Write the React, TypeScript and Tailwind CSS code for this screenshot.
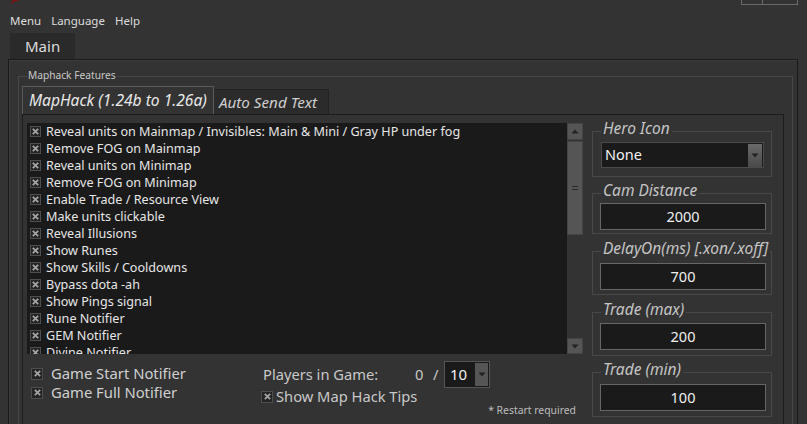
const features = [
  'Reveal units on Mainmap / Invisibles: Main & Mini / Gray HP under fog',
  'Remove FOG on Mainmap',
  'Reveal units on Minimap',
  'Remove FOG on Minimap',
  'Enable Trade / Resource View',
  'Make units clickable',
  'Reveal Illusions',
  'Show Runes',
  'Show Skills / Cooldowns',
  'Bypass dota -ah',
  'Show Pings signal',
  'Rune Notifier',
  'GEM Notifier',
  'Divine Notifier',
]

const font = { fontFamily: '"Noto Sans", "Open Sans", sans-serif' }

function CheckX({ box = 'w-[11px] h-[11px]' }: { box?: string }) {
  return (
    <span className={`${box} shrink-0 border border-[#4e4e4e] bg-[#242424] flex items-center justify-center`}>
      <svg width="7" height="7" viewBox="0 0 7 7">
        <path d="M0.8 0.8 L6.2 6.2 M6.2 0.8 L0.8 6.2" stroke="#a6a6a6" strokeWidth="1.7" />
      </svg>
    </span>
  )
}

function ArrowDown({ color = '#222' }: { color?: string }) {
  return (
    <svg width="8" height="5" viewBox="0 0 8 5">
      <path d="M0.5 0.5 L7.5 0.5 L4 4.5 Z" fill={color} />
    </svg>
  )
}

function Box({ label, top, h, children }: { label: string; top: string; h: string; children: React.ReactNode }) {
  return (
    <div className={`relative shrink-0 ${top} ${h} border border-[#484848]`}>
      <span className="absolute -top-[13px] left-[8px] px-[2px] bg-[#333333] italic text-[15.5px] leading-[18px] text-[#c4c4c4] whitespace-nowrap">
        {label}
      </span>
      {children}
    </div>
  )
}

function ValueInput({ value, mt }: { value: string; mt: string }) {
  return (
    <div className={`${mt} ml-[7px] w-[166px] h-[27px] bg-[#1a1a1a] border border-[#666] flex items-center justify-center text-[14.5px] text-[#f0f0f0]`}>
      {value}
    </div>
  )
}

export default function App() {
  return (
    <div className="w-[807px] h-[424px] overflow-hidden bg-[#333333] flex flex-col text-[#e6e6e6]" style={font}>
      {/* title strip */}
      <div className="h-[12px] shrink-0 flex justify-between items-start">
        <svg className="ml-[10px]" width="10" height="4" viewBox="0 0 10 4">
          <path d="M0 4 L3 0 L10 0 Q5 1 0 4 Z" fill="#7a1212" />
        </svg>
        <div className="mr-[9px] flex">
          <div className="w-[22px] h-[5px] border border-t-0 border-[#6b6b6b]" />
          <div className="w-[35px] h-[5px] border border-t-0 border-l-0 border-[#6b6b6b]" />
        </div>
      </div>

      {/* menu */}
      <div className="h-[18px] shrink-0 flex items-center gap-[10px] pl-[10px] text-[11.5px] text-[#dcdcdc]">
        <span>Menu</span>
        <span>Language</span>
        <span>Help</span>
      </div>

      {/* main tab */}
      <div className="shrink-0 mt-[3px] ml-[10px] w-[65px] h-[26px] bg-[#2a2a2a] flex items-center pl-[15px] text-[15px] text-[#dcdcdc]">
        Main
      </div>

      {/* outer panel */}
      <div className="ml-[8px] w-[790px] flex-1 min-h-0 overflow-hidden border border-b-0 border-[#1a1a1a] shadow-[inset_1px_1px_0_#3c3c3c]">
        <div className="relative mt-[16px] ml-[9px] w-[775px] h-[400px] border border-b-0 border-[#474747]">
          <span className="absolute -top-[10px] left-[8px] px-[1px] bg-[#333333] text-[10.2px] leading-[16px] text-[#c8c8c8]">
            Maphack Features
          </span>

          {/* inner tabs */}
          <div className="pt-[9px] pl-[3px] flex items-end">
            <div className="w-[192px] h-[28px] border border-b-0 border-[#5a5a5a] bg-[#333333] flex items-center pl-[6px] italic text-[15.6px] text-[#e8e8e8] whitespace-nowrap">
              MapHack (1.24b to 1.26a)
            </div>
            <div className="w-[115px] h-[25px] border border-b-0 border-l-0 border-[#222] bg-[#2b2b2b] flex items-center pl-[5px] italic text-[15.2px] text-[#cfcfcf] whitespace-nowrap">
              Auto Send Text
            </div>
          </div>

          {/* tab panel */}
          <div className="ml-[3px] w-[762px] h-[320px] border border-b-0 border-[#1c1c1c] flex">
            <div className="pl-[4px] pt-[8px] flex flex-col">
              {/* listbox */}
              <div className="w-[556px] h-[231px] shrink-0 bg-[#1a1a1a] flex">
                <div className="w-[540px] overflow-hidden">
                  {features.map(f => (
                    <div key={f} className="h-[17px] flex items-center pl-[3px] text-[12.6px] leading-[17px] whitespace-nowrap">
                      <CheckX />
                      <span className="ml-[5px]">{f}</span>
                    </div>
                  ))}
                </div>
                <div className="w-[16px] flex flex-col bg-[#333333]">
                  <div className="h-[17px] bg-[#555] border border-[#444] flex items-center justify-center">
                    <svg width="8" height="5" viewBox="0 0 8 5">
                      <path d="M0.5 4.5 L7.5 4.5 L4 0.5 Z" fill="#222" />
                    </svg>
                  </div>
                  <div className="mt-[1px] h-[94px] bg-[#555] border border-[#444] flex items-center justify-center">
                    <svg width="6" height="4" viewBox="0 0 6 4">
                      <path d="M0 0.5 H6 M0 3.5 H6" stroke="#2a2a2a" strokeWidth="1" />
                    </svg>
                  </div>
                  <div className="flex-1" />
                  <div className="h-[16px] bg-[#555] border border-[#444] flex items-center justify-center">
                    <ArrowDown />
                  </div>
                </div>
              </div>

              {/* bottom controls */}
              <div className="flex">
                <div className="w-[234px] pl-[4px] pt-[10px] flex flex-col text-[14.8px] text-[#d0d0d0]">
                  <div className="h-[19px] flex items-center">
                    <CheckX box="w-[12px] h-[12px]" />
                    <span className="ml-[8px]">Game Start Notifier</span>
                  </div>
                  <div className="h-[19px] flex items-center">
                    <CheckX box="w-[12px] h-[12px]" />
                    <span className="ml-[8px]">Game Full Notifier</span>
                  </div>
                </div>
                <div className="w-[322px] flex flex-col text-[14.7px] text-[#c8c8c8]">
                  <div className="mt-[7px] h-[27px] flex items-center">
                    <span className="w-[154px] pl-[2px]">Players in Game:</span>
                    <span className="w-[18px]">0</span>
                    <span className="w-[11px]">/</span>
                    <div className="w-[46px] h-[27px] bg-[#1a1a1a] border border-[#555] flex items-center">
                      <span className="flex-1 pl-[5px] text-[15px] text-[#f2f2f2]">10</span>
                      <div className="w-[13px] h-[23px] mr-[1px] bg-[#555] flex items-center justify-center">
                        <ArrowDown />
                      </div>
                    </div>
                  </div>
                  <div className="h-[17px] flex items-center">
                    <CheckX box="w-[12px] h-[12px]" />
                    <span className="ml-[3px]">Show Map Hack Tips</span>
                  </div>
                  <div className="mt-[-1px] h-[14px] flex items-center justify-end pr-[7px] text-[10.4px] text-[#bdbdbd]">
                    * Restart required
                  </div>
                </div>
              </div>
            </div>

            {/* right column */}
            <div className="ml-[9px] w-[180px] flex flex-col">
              <Box label="Hero Icon" top="mt-[16px]" h="h-[46px]">
                <div className="mt-[10px] ml-[8px] w-[163px] h-[26px] bg-[#1a1a1a] border border-[#4a4a4a] flex items-center">
                  <span className="flex-1 pl-[3px] text-[14.5px] text-[#f2f2f2]">None</span>
                  <div className="w-[14px] h-[23px] mr-[1px] bg-gradient-to-b from-[#6a6a6a] to-[#4a4a4a] flex items-center justify-center">
                    <ArrowDown />
                  </div>
                </div>
              </Box>
              <Box label="Cam Distance" top="mt-[16px]" h="h-[41px]">
                <ValueInput value="2000" mt="mt-[9px]" />
              </Box>
              <Box label="DelayOn(ms) [.xon/.xoff]" top="mt-[17px]" h="h-[44px]">
                <ValueInput value="700" mt="mt-[11px]" />
              </Box>
              <Box label="Trade (max)" top="mt-[17px]" h="h-[44px]">
                <ValueInput value="200" mt="mt-[10px]" />
              </Box>
              <Box label="Trade (min)" top="mt-[16px]" h="h-[45px]">
                <ValueInput value="100" mt="mt-[11px]" />
              </Box>
            </div>
          </div>
        </div>
      </div>
    </div>
  )
}
